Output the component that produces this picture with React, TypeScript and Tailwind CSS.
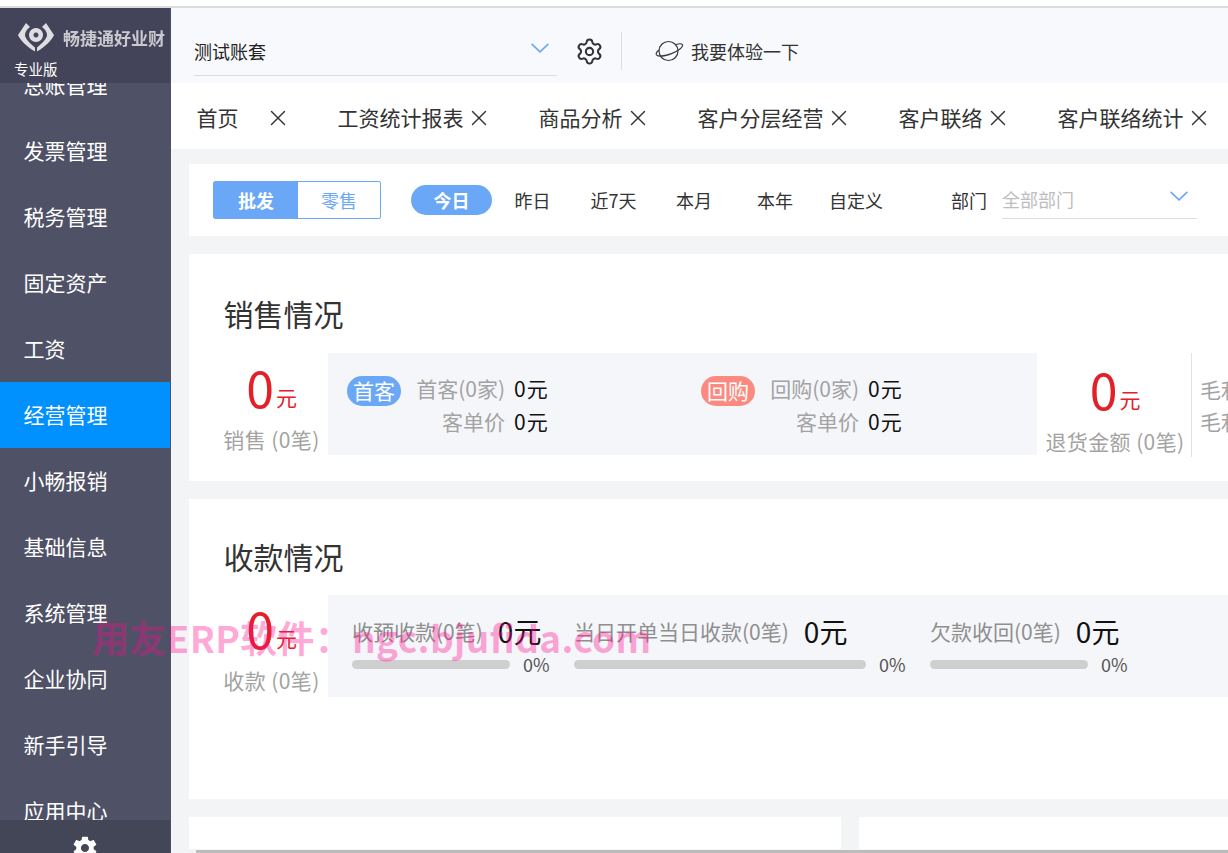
import { Settings, X } from 'lucide-react';
import { IoMdSettings } from 'react-icons/io';

const menus = ['总账管理', '发票管理', '税务管理', '固定资产', '工资', '经营管理', '小畅报销', '基础信息', '系统管理', '企业协同', '新手引导', '应用中心'];

const tabs = [
  { name: '首页', gap: 'ml-[26px]' },
  { name: '工资统计报表', gap: 'ml-[2px]' },
  { name: '商品分析', gap: 'ml-[2px]' },
  { name: '客户分层经营', gap: 'ml-[2px]' },
  { name: '客户联络', gap: 'ml-[2px]' },
  { name: '客户联络统计', gap: 'ml-[2px]' },
];

const Chevron = () => (
  <svg width="18" height="10" viewBox="0 0 18 10" fill="none" stroke="#6aa8f7" strokeWidth="1.6">
    <path d="M.6.8 9 8.800 17.400.8" />
  </svg>
);

const Logo = () => (
  <svg width="36" height="29" viewBox="0 0 36 29" fill="#dedee2" className="blur-[0.4px] shrink-0">
    <path d="M8 0 0 12c2 5 9 12 17 16.500V24.500C12 20.500 7 15.500 7 12c0-3 2-6 5-8z" />
    <path d="M28 0l8 12c-2 5-9 12-17 16.500V24.500c5-4 10-9 10-12.500 0-3-2-6-5-8z" />
    <path fillRule="evenodd" d="M18 5a7 7 0 1 0 .01 0zM18 9.500a2.500 2.500 0 1 1-.01 0z" />
  </svg>
);

const Planet = () => (
  <svg width="30" height="24" viewBox="0 0 30 24" fill="none" stroke="#3a3a3a" strokeWidth="1.2">
    <circle cx="14.500" cy="12" r="9.500" />
    <path d="M21.500 5.800c3.500-1.300 6.300-1.300 7 0 .8 2-4 6.200-11 8.800-7 2.600-13.500 3.200-15 1.200-.8-1.200.2-3 2.500-4.800" />
  </svg>
);

const StatBlock = ({ label }: { label: string }) => (
  <div className="flex flex-col items-center">
    <div className="flex items-end text-[#e3202a]">
      <span className="text-[50px] leading-[58px]">0</span>
      <span className="text-[21px] leading-[36px] ml-[2px]">元</span>
    </div>
    <span className="text-[21px] leading-[30px] tracking-[0.4px] text-[#a3a3a3] mt-[9px] whitespace-nowrap">{label}</span>
  </div>
);

const CustomerGroup = ({ badge, badgeColor, label }: { badge: string; badgeColor: string; label: string }) => (
  <div className="w-[354px] pl-[19px] flex items-start">
    <span className={`w-[54px] h-[30px] rounded-full text-white text-[21px] leading-[29px] text-center ${badgeColor}`}>{badge}</span>
    <div className="w-[89px] ml-[15px] flex flex-col items-end text-[21px] leading-[33px] text-[#a3a3a3] -mt-[4px]">
      <span className="whitespace-nowrap">{label}</span>
      <span>客单价</span>
    </div>
    <div className="ml-[9px] flex flex-col text-[21px] leading-[33px] tracking-[1px] text-[#111111] -mt-[4px]">
      <span>0元</span>
      <span>0元</span>
    </div>
  </div>
);

const Collect = ({ label, width, barWidth }: { label: string; width: string; barWidth: string }) => (
  <div className={`${width} shrink-0 flex flex-col`}>
    <div className="flex items-center gap-[15px] h-[40px] whitespace-nowrap">
      <span className="text-[21px] text-[#8f8f8f]">{label}</span>
      <span className="text-[28px] leading-[34px] -mt-[2px] text-[#111111]">0元</span>
    </div>
    <div className="flex items-center gap-[13px] h-[24px]">
      <div className={`${barWidth} h-[9px] rounded-full bg-[#cfcfcf]`} />
      <span className="text-[18px] text-[#555555]">0%</span>
    </div>
  </div>
);

export default function App() {
  return (
    <div className="relative w-[1228px] h-[853px] overflow-hidden bg-white font-['Noto_Sans_CJK_SC','Noto_Sans',sans-serif]">
      <div className="h-[6px] bg-white" />
      <div className="h-[2px] bg-[#dcdcdc]" />
      <div className="flex h-[845px]">
        {/* sidebar */}
        <aside className="relative w-[171px] shrink-0 bg-[#4f5266] overflow-hidden">
          <nav className="pt-[44px] w-[170px]">
            {menus.map((m) => (
              <div
                key={m}
                className={`h-[66px] pl-[23.500px] flex items-center text-[21px] text-white ${m === '经营管理' ? 'bg-[#0091ff]' : ''}`}
              >
                {m}
              </div>
            ))}
          </nav>
          <div className="absolute top-0 left-0 w-[170px] h-[75px] bg-[#434359]">
            <div className="flex items-center pl-[18px] pt-[15px]">
              <Logo />
              <span className="ml-[9px] text-[17px] leading-[24px] font-bold text-[#c9c9cf] blur-[0.4px] whitespace-nowrap">畅捷通好业财</span>
            </div>
            <div className="pl-[14px] mt-[7px] text-[14.500px] leading-[20px] text-white">专业版</div>
          </div>
          <div className="absolute bottom-0 left-0 w-[170px] h-[33px] bg-[#424656] flex justify-center">
            <IoMdSettings className="text-white mt-[14px] shrink-0" size={28} />
          </div>
        </aside>

        {/* main */}
        <main className="flex-1 min-w-0 bg-[#f3f4f6] flex flex-col">
          <div className="h-[75px] bg-[#f7f9fc] flex items-center shrink-0">
            <div className="ml-[23px] w-[363px] h-[47px] mt-[14px] pb-[2px] border-b border-[#dcdde4] flex items-center justify-between pr-[8px]">
              <span className="text-[18px] text-[#222222]">测试账套</span>
              <span className="-mt-[6px]"><Chevron /></span>
            </div>
            <Settings className="ml-[18px] mt-[11px] text-[#333333]" size={29} strokeWidth={1.7} />
            <div className="ml-[17px] w-px h-[38px] bg-[#dcdde4] mt-[10px]" />
            <div className="ml-[32px] mt-[10px]"><Planet /></div>
            <span className="ml-[7px] mt-[11px] text-[18px] text-[#333333]">我要体验一下</span>
          </div>

          <div className="h-[66px] bg-white flex items-center pl-[25.500px] pt-[4px] shrink-0 gap-[47px] whitespace-nowrap">
            {tabs.map((t) => (
              <div key={t.name} className="flex items-center shrink-0 text-[21px] text-[#333333]">
                <span>{t.name}</span>
                <X className={t.gap} size={26} strokeWidth={1.3} />
              </div>
            ))}
          </div>

          <div className="ml-[18px] mt-[15px] h-[72px] bg-white shrink-0 flex items-center text-[18px] text-[#333333] whitespace-nowrap">
            <div className="ml-[24px] w-[168px] h-[38px] rounded-[2px] border border-[#6aa8f7] flex overflow-hidden">
              <span className="w-[84px] bg-[#6aa8f7] text-white font-bold text-center leading-[36px]">批发</span>
              <span className="flex-1 text-[#6aa8f7] text-center leading-[36px]">零售</span>
            </div>
            <span className="ml-[30px] w-[81px] h-[30px] rounded-full bg-[#6aa8f7] text-white font-bold text-center leading-[30px]">今日</span>
            <span className="ml-[22.500px]">昨日</span>
            <span className="ml-[40px]">近7天</span>
            <span className="ml-[39.500px]">本月</span>
            <span className="ml-[45px]">本年</span>
            <span className="ml-[36px]">自定义</span>
            <span className="ml-[68px]">部门</span>
            <div className="ml-[15px] w-[195px] h-[36px] mt-[1px] border-b border-[#dcdcdc] flex items-center justify-between pr-[9px]">
              <span className="text-[#bdbdbd] -mt-[2px]">全部部门</span>
              <span className="-mt-[8px]"><Chevron /></span>
            </div>
          </div>

          <section className="ml-[18px] mt-[18px] h-[227px] bg-white shrink-0 overflow-hidden">
            <h2 className="ml-[34.500px] mt-[38px] text-[30px] leading-[42px] text-[#333333]">销售情况</h2>
            <div className="flex mt-[19px] h-[104px]">
              <div className="w-[139px] shrink-0 pl-[26px] mt-[4px]"><StatBlock label="销售 (0笔)" /></div>
              <div className="w-[709px] h-[102px] shrink-0 bg-[#f5f6fa] flex pt-[23px]">
                <CustomerGroup badge="首客" badgeColor="bg-[#6aa8f7]" label="首客(0家)" />
                <CustomerGroup badge="回购" badgeColor="bg-[#fb8a80]" label="回购(0家)" />
              </div>
              <div className="w-[155px] shrink-0 border-r border-[#e2e2e2] pl-[2px] flex justify-center">
                <div className="mt-[6px]"><StatBlock label="退货金额 (0笔)" /></div>
              </div>
              <div className="pl-[8px] pt-[20px] flex flex-col text-[21px] leading-[32px] text-[#a3a3a3] whitespace-nowrap">
                <span>毛利润</span>
                <span>毛利率</span>
              </div>
            </div>
          </section>

          <section className="ml-[18px] mt-[18px] h-[300px] bg-white shrink-0 overflow-hidden">
            <h2 className="ml-[34.500px] mt-[36px] text-[30px] leading-[42px] text-[#333333]">收款情况</h2>
            <div className="flex mt-[18px]">
              <div className="w-[139px] shrink-0 pl-[26px] mt-[3px]"><StatBlock label="收款 (0笔)" /></div>
              <div className="flex-1 h-[102px] bg-[#f5f6fa] flex pl-[24px] pt-[17px]">
                <Collect label="收预收款(0笔)" width="w-[222px]" barWidth="w-[158px]" />
                <Collect label="当日开单当日收款(0笔)" width="w-[356px]" barWidth="w-[292px]" />
                <Collect label="欠款收回(0笔)" width="w-[222px]" barWidth="w-[158px]" />
              </div>
            </div>
          </section>

          <div className="ml-[18px] mt-[18px] flex gap-[18px] h-[32px] shrink-0">
            <div className="w-[652px] bg-white" />
            <div className="flex-1 bg-white" />
          </div>
          <div className="ml-[25px] mt-[1px] h-[3px] bg-[#bcbcbc] shrink-0" />
        </main>
      </div>

      {/* watermark */}
      <div className="absolute left-[92px] top-[612px] text-[37px] leading-[50px] tracking-[0.3px] font-bold text-[#ff068c]/35 whitespace-nowrap pointer-events-none">
        用友ERP软件：ngc.bjufida.com
      </div>
    </div>
  );
}
